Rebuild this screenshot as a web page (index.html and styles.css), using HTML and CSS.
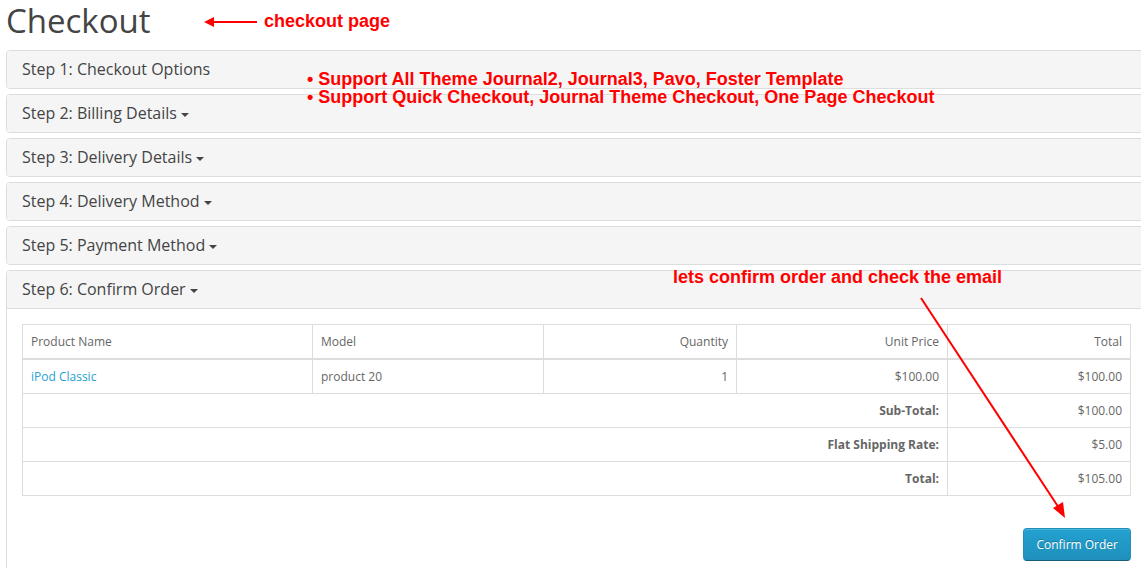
FILE: index.html
```html
<!DOCTYPE html>
<html lang="en">
<head>
<meta charset="UTF-8">
<title>Checkout</title>
<link rel="stylesheet" href="styles.css">
</head>
<body>
<div class="page">
    <h1 class="page-title">Checkout</h1>

    <div class="panel">
        <div class="panel-heading">Step 1: Checkout Options</div>
    </div>
    <div class="panel">
        <div class="panel-heading">Step 2: Billing Details <span class="caret"></span></div>
    </div>
    <div class="panel">
        <div class="panel-heading">Step 3: Delivery Details <span class="caret"></span></div>
    </div>
    <div class="panel">
        <div class="panel-heading">Step 4: Delivery Method <span class="caret"></span></div>
    </div>
    <div class="panel">
        <div class="panel-heading">Step 5: Payment Method <span class="caret"></span></div>
    </div>
    <div class="panel panel-open">
        <div class="panel-heading">Step 6: Confirm Order <span class="caret"></span></div>
        <div class="panel-body">
            <table class="order-table">
                <thead>
                    <tr>
                        <td class="col-name">Product Name</td>
                        <td class="col-model">Model</td>
                        <td class="right col-qty">Quantity</td>
                        <td class="right col-price">Unit Price</td>
                        <td class="right">Total</td>
                    </tr>
                </thead>
                <tbody>
                    <tr>
                        <td><a href="#">iPod Classic</a></td>
                        <td>product 20</td>
                        <td class="right">1</td>
                        <td class="right">$100.00</td>
                        <td class="right">$100.00</td>
                    </tr>
                </tbody>
                <tfoot>
                    <tr>
                        <td colspan="4" class="right"><strong>Sub-Total:</strong></td>
                        <td class="right">$100.00</td>
                    </tr>
                    <tr>
                        <td colspan="4" class="right"><strong>Flat Shipping Rate:</strong></td>
                        <td class="right">$5.00</td>
                    </tr>
                    <tr>
                        <td colspan="4" class="right"><strong>Total:</strong></td>
                        <td class="right">$105.00</td>
                    </tr>
                </tfoot>
            </table>
            <div class="buttons">
                <button class="btn-primary">Confirm Order</button>
            </div>
        </div>
    </div>

    <!-- notes drawn over the screenshot -->
    <div class="note note-page">checkout page</div>
    <div class="note note-support">
        &bull; Support All Theme Journal2, Journal3, Pavo, Foster Template<br>
        &bull; Support Quick Checkout, Journal Theme Checkout, One Page Checkout
    </div>
    <div class="note note-confirm">lets confirm order and check the email</div>

    <svg class="arrows" width="1141" height="568" viewBox="0 0 1141 568">
        <line x1="257" y1="22" x2="212" y2="22" stroke="#f00" stroke-width="2"/>
        <polygon points="204,22 214,17 214,27" fill="#f00"/>
        <line x1="921" y1="298" x2="1059" y2="508" stroke="#f00" stroke-width="2"/>
        <polygon points="1065,518 1053,508 1063,502" fill="#f00"/>
    </svg>
</div>
</body>
</html>
```

FILE: styles.css
```css
html, body {
    margin: 0;
    height: 100%;
    overflow: hidden;
    background: #fff;
}

.page {
    position: relative;
    width: 1141px;
    margin-left: 6px;
    font-family: "Open Sans", "Liberation Sans", sans-serif;
    color: #444;
}

.page-title {
    font-size: 33px;
    font-weight: 400;
    line-height: 42px;
    margin: 0 0 8px 0;
    color: #444;
}

.panel {
    border: 1px solid #ddd;
    border-radius: 4px;
    background: #fff;
    margin-bottom: 5px;
}

.panel-heading {
    background: #f5f5f5;
    font-size: 16px;
    line-height: 17px;
    padding: 10px 15px 10px 15px;
    border-radius: 3px;
}

.panel-open .panel-heading {
    border-bottom: 1px solid #ddd;
    border-radius: 3px 3px 0 0;
}

.caret {
    display: inline-block;
    width: 0;
    height: 0;
    vertical-align: middle;
    border-top: 4px solid #444;
    border-left: 4px solid transparent;
    border-right: 4px solid transparent;
}

.panel-body {
    padding: 15px 15px 20px 15px;
}

.order-table {
    width: 100%;
    border-collapse: collapse;
    font-size: 12px;
    color: #666;
    margin-bottom: 20px;
}

.order-table td {
    border: 1px solid #ddd;
    padding: 8px;
    line-height: 17px;
}

.order-table thead td {
    border-bottom: 2px solid #ddd;
}

.order-table .col-name { width: 273px; }
.order-table .col-model { width: 214px; }
.order-table .col-qty { width: 176px; }
.order-table .col-price { width: 194px; }

.order-table .right {
    text-align: right;
}

.order-table a {
    color: #23a1d1;
    text-decoration: none;
}

.order-table strong {
    font-weight: 700;
}

.buttons {
    display: flex;
    justify-content: flex-end;
    margin-top: 32px;
}

.btn-primary {
    font-family: "Open Sans", "Liberation Sans", sans-serif;
    font-size: 12px;
    line-height: 17px;
    color: #fff;
    padding: 7px 12px 7px 12px;
    border: 1px solid #1f90bb;
    border-bottom-color: #145e7a;
    border-radius: 4px;
    background: linear-gradient(to bottom, #23a1d1, #1f90bb);
    text-shadow: 0 -1px 0 rgba(0, 0, 0, 0.25);
    box-shadow: inset 0 1px 0 rgba(255, 255, 255, 0.2);
}

.note {
    position: absolute;
    font-family: "Liberation Sans", Arial, sans-serif;
    font-weight: 700;
    font-size: 18px;
    color: #f00;
    line-height: 18px;
    white-space: nowrap;
}

.note-page {
    left: 258px;
    top: 12px;
}

.note-support {
    left: 301px;
    top: 70px;
}

.note-confirm {
    left: 667px;
    top: 268px;
}

.arrows {
    position: absolute;
    left: -6px;
    top: 0;
    pointer-events: none;
}
```
